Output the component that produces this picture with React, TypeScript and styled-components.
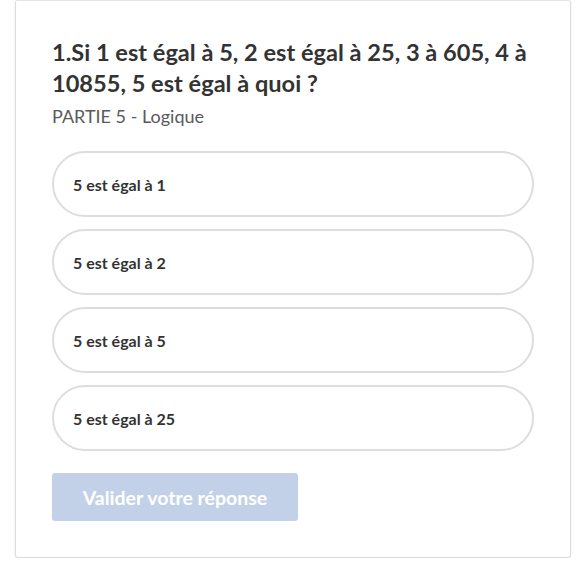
import styled, { createGlobalStyle } from 'styled-components';

const GlobalStyle = createGlobalStyle`
  html, body {
    margin: 0;
    padding: 0;
    background: #ffffff;
  }
  body {
    font-family: Lato, 'Open Sans', sans-serif;
    color: #333333;
  }
`;

const Page = styled.div`
  padding: 0 11px 0 15px;
`;

const Card = styled.div`
  box-sizing: border-box;
  width: 556px;
  height: 558px;
  border: 1px solid #dcdcdc;
  border-top-color: #e4e4e4;
  border-radius: 3px;
  box-shadow: 0 1px 3px rgba(0, 0, 0, 0.08);
  background: #fff;
  padding: 36px 36px 0 36px;
  display: flex;
  flex-direction: column;
`;

const Question = styled.h2`
  margin: 0;
  font-size: 23.6px;
  line-height: 31px;
  font-weight: 700;
  color: #333;
`;

const Section = styled.div`
  margin-top: 6px;
  font-size: 18px;
  line-height: 22px;
  color: #5a5a5a;
`;

const Options = styled.div`
  margin-top: 24px;
  display: flex;
  flex-direction: column;
  gap: 12px;
`;

const Option = styled.button`
  box-sizing: border-box;
  width: 482px;
  height: 66px;
  border: 2px solid #dddddd;
  border-radius: 33px;
  background: #fff;
  padding: 0 19px;
  text-align: left;
  font-family: inherit;
  font-size: 16px;
  font-weight: 700;
  color: #333;
  cursor: pointer;
`;

const Submit = styled.button<{ disabled?: boolean }>`
  margin-top: 22px;
  align-self: flex-start;
  width: 246px;
  height: 48px;
  border: none;
  border-radius: 3px;
  background: ${(p) => (p.disabled ? '#c3d1e8' : '#3b6fc4')};
  color: #fff;
  font-family: inherit;
  font-size: 19.5px;
  font-weight: 700;
`;

const answers = ['5 est égal à 1', '5 est égal à 2', '5 est égal à 5', '5 est égal à 25'];

const App = () => {
  return (
    <Page>
      <GlobalStyle />
      <Card>
        <Question>
          1.Si 1 est égal à 5, 2 est égal à 25, 3 à 605, 4 à 10855, 5 est égal à quoi ?
        </Question>
        <Section>PARTIE 5 - Logique</Section>
        <Options>
          {answers.map((a) => (
            <Option key={a}>{a}</Option>
          ))}
        </Options>
        <Submit disabled>Valider votre réponse</Submit>
      </Card>
    </Page>
  );
};

export default App;
